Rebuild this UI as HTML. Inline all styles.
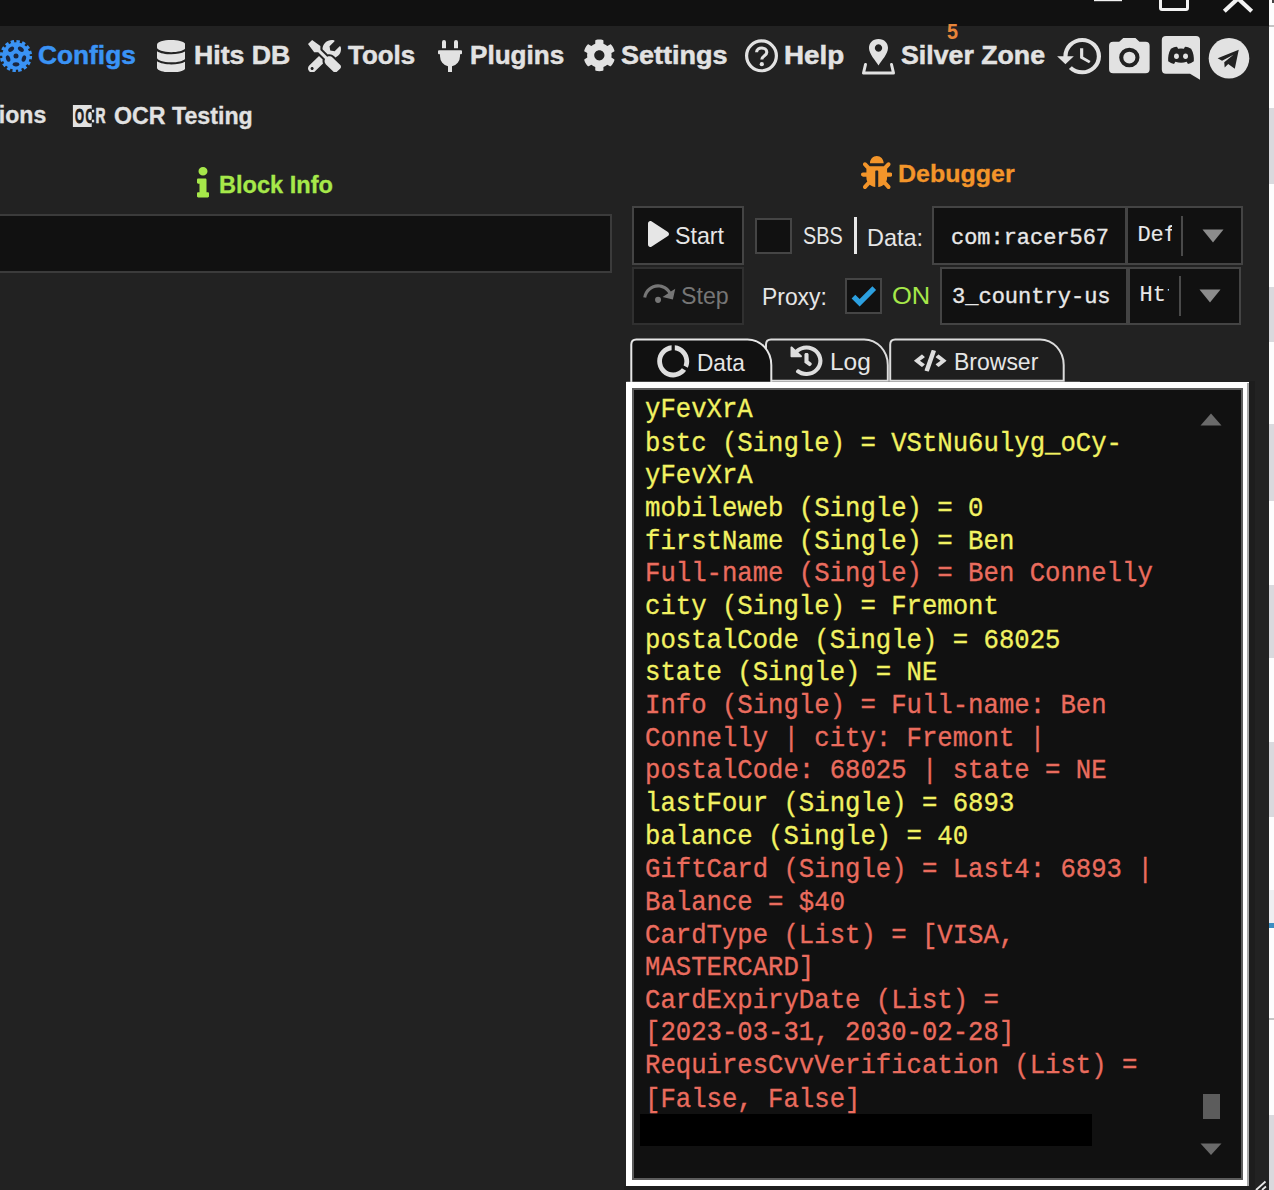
<!DOCTYPE html>
<html>
<head>
<meta charset="utf-8">
<title>SilverBullet</title>
<style>
html,body{margin:0;padding:0;}
body{width:1274px;height:1190px;overflow:hidden;background:#222222;position:relative;font-family:"Liberation Sans",sans-serif;color:#e2e2e2;}
.abs{position:absolute;}
.t{position:absolute;white-space:nowrap;line-height:1;transform-origin:0 0;}
#titlebar{left:0;top:0;width:1269px;height:25.6px;background:#111111;}
#strip{left:1269px;top:0;width:5px;height:1190px;background:#fdfdfd;}
#strip i{position:absolute;left:0;width:5px;background:#d9d9dd;display:block;}
.nav{font-weight:bold;font-size:26.7px;color:#e2e2e2;-webkit-text-stroke:0.5px currentColor;}
.nav2{font-weight:bold;font-size:23.6px;color:#e2e2e2;-webkit-text-stroke:0.3px currentColor;}
.box{position:absolute;background:#111111;border:2px solid #3b3b3b;box-sizing:border-box;}
.btn{font-size:24.2px;color:#e6e6e6;}
.mono{font-family:"Liberation Mono",monospace;color:#e8e8e8;-webkit-text-stroke:0.35px #e8e8e8;}
#ta{left:626.3px;top:382.3px;width:622.4px;height:803.7px;background:#ffffff;}
#ta2{left:632.3px;top:388.3px;width:610.4px;height:791.3px;background:#5c5c5c;}
#ta3{left:633.9px;top:390px;width:607.5px;height:788.2px;background:#111111;}
#log{left:645px;top:394.6px;width:560px;font-family:"Liberation Mono",monospace;font-size:25.65px;line-height:30.654px;color:#f2f262;-webkit-text-stroke:0.3px currentColor;white-space:pre;transform:scaleY(1.07);transform-origin:0 0;}
#log .r{color:#ea6c5e;}
</style>
</head>
<body>
<div id="titlebar" class="abs"></div>
<svg class="abs" style="left:1080px;top:0;" width="189" height="25" viewBox="0 0 189 25">
 <rect x="14" y="-2" width="28" height="3.2" fill="#f2f2f2"/>
 <rect x="80.500" y="-4" width="27" height="13.500" fill="none" stroke="#f2f2f2" stroke-width="3" rx="1.500"/>
 <path d="M144.300,11.200 L158,-1.500 L171.700,11.200" stroke="#f2f2f2" stroke-width="4.200" fill="none" stroke-linejoin="miter"/>
</svg>
<div id="strip" class="abs">
 <i style="top:25px;height:1.500px;background:#c4c4c4"></i>
 <i style="top:0;left:3px;width:2px;height:2.500px;background:#444"></i>
 <i style="top:108px;height:76px"></i>
 <i style="top:287px;height:55px"></i>
 <i style="top:424px;height:76.500px"></i>
 <i style="top:585px;height:73px"></i>
 <i style="top:741.500px;height:75.500px"></i>
 <i style="top:889.500px;height:34px;background:#eeeef1"></i>
 <i style="top:923.300px;height:4.400px;background:#3d8fc2"></i>
 <i style="top:1018px;height:1.500px;background:#c4c4c4"></i>
 <i style="top:1115.400px;height:75px"></i>
</div>

<!-- top nav -->
<svg class="abs" style="left:-0.6px;top:38.6px;" width="34" height="34" viewBox="-17 -17 34 34">
 <g fill="#3a93f5">
  <circle r="13.800"/>
  <circle r="14.300" fill="none" stroke="#3a93f5" stroke-width="3.600" stroke-dasharray="3.300 2.316"/>
 </g>
 <g fill="#1b2740">
  <circle r="2.500"/>
  <ellipse cx="0" cy="-8.300" rx="3.300" ry="2.100" transform="rotate(36)"/>
  <ellipse cx="0" cy="-8.300" rx="3.300" ry="2.100" transform="rotate(108)"/>
  <ellipse cx="0" cy="-8.300" rx="3.300" ry="2.100" transform="rotate(180)"/>
  <ellipse cx="0" cy="-8.300" rx="3.300" ry="2.100" transform="rotate(252)"/>
  <ellipse cx="0" cy="-8.300" rx="3.300" ry="2.100" transform="rotate(324)"/>
 </g>
</svg>
<span id="n1" class="t nav" style="left:38.0px;top:42.0px;color:#3a93f5;transform:scaleX(0.9851);">Configs</span>
<svg class="abs" style="left:156.5px;top:39.5px;" width="28.5" height="32.5" viewBox="0 0 448 512" preserveAspectRatio="none" ><path fill="#e2e2e2" d="M448 73.143v45.714C448 159.143 347.667 192 224 192S0 159.143 0 118.857V73.143C0 32.857 100.333 0 224 0s224 32.857 224 73.143zM448 176v102.857C448 319.143 347.667 352 224 352S0 319.143 0 278.857V176c48.125 33.143 136.208 48.572 224 48.572S399.874 209.143 448 176zm0 160v102.857C448 479.143 347.667 512 224 512S0 479.143 0 438.857V336c48.125 33.143 136.208 48.572 224 48.572S399.874 369.143 448 336z"/></svg>
<span id="n2" class="t nav" style="left:193.9px;top:42.0px;transform:scaleX(0.9986);">Hits DB</span>
<svg class="abs" style="left:308px;top:39.5px;" width="33" height="32.5" viewBox="0 0 512 512" preserveAspectRatio="none" ><path fill="#e2e2e2" d="M501.1 395.7L384 278.6c-23.1-23.1-57.6-27.6-85.4-13.9L192 158.1V96L64 0 0 64l96 128h62.100l106.600 106.600c-13.600 27.800-9.200 62.300 13.900 85.400l117.100 117.100c14.600 14.600 38.200 14.600 52.700 0l52.700-52.700c14.500-14.600 14.500-38.200 0-52.700zM331.700 225c28.300 0 54.900 11 74.900 31l19.400 19.400c15.800-6.900 30.800-16.500 43.800-29.500 37.100-37.100 49.700-89.300 37.900-136.700-2.200-9-13.500-12.100-20.100-5.500l-74.400 74.400-67.900-11.300L334 98.900l74.400-74.400c6.600-6.600 3.400-17.900-5.700-20.200-47.400-11.700-99.600.9-136.600 37.900-28.500 28.500-41.900 66.100-41.200 103.600l82.100 82.100c8.100-1.900 16.500-2.900 24.700-2.900zm-103.900 82l-56.700-56.700L18.700 402.800c-25 25-25 65.500 0 90.500s65.500 25 90.500 0l123.600-123.600c-7.600-19.900-9.900-41.600-5-62.700zM64 472c-13.200 0-24-10.800-24-24 0-13.300 10.700-24 24-24s24 10.700 24 24c0 13.200-10.700 24-24 24z"/></svg>
<span id="n3" class="t nav" style="left:348.3px;top:42.0px;transform:scaleX(0.9696);">Tools</span>
<svg class="abs" style="left:438px;top:39.500px;" width="24" height="32.500" viewBox="0 0 384 512" preserveAspectRatio="none" ><path fill="#e2e2e2" d="M320,32a32,32,0,0,0-64,0v96h64Zm48,128H16A16,16,0,0,0,0,176v32a16,16,0,0,0,16,16H32v32A160.070,160.070,0,0,0,160,412.800V512h64V412.800A160.070,160.070,0,0,0,352,256V224h16a16,16,0,0,0,16-16V176A16,16,0,0,0,368,160ZM128,32a32,32,0,0,0-64,0v96h64Z"/></svg>
<span id="n4" class="t nav" style="left:469.9px;top:42.0px;transform:scaleX(0.9777);">Plugins</span>
<svg class="abs" style="left:582.500px;top:39.300px;" width="32.700" height="32.700" viewBox="0 0 512 512" preserveAspectRatio="none" ><path fill="#e2e2e2" d="M487.4 315.7l-42.600-24.600c4.300-23.200 4.300-47 0-70.200l42.600-24.600c4.900-2.800 7.100-8.600 5.500-14-11.100-35.600-30-67.800-54.700-94.600-3.800-4.100-10-5.100-14.800-2.300L380.800 110c-17.900-15.400-38.500-27.300-60.800-35.100V25.800c0-5.600-3.900-10.500-9.400-11.700-36.700-8.200-74.300-7.800-109.200 0-5.500 1.200-9.400 6.100-9.400 11.700V75c-22.200 7.900-42.800 19.800-60.800 35.100L88.700 85.500c-4.900-2.800-11-1.900-14.800 2.300-24.700 26.700-43.600 58.900-54.700 94.600-1.700 5.400.6 11.200 5.500 14L67.300 221c-4.300 23.200-4.300 47 0 70.200l-42.600 24.600c-4.900 2.800-7.100 8.600-5.500 14 11.100 35.600 30 67.800 54.700 94.600 3.800 4.100 10 5.100 14.800 2.300l42.600-24.600c17.900 15.400 38.500 27.300 60.800 35.100v49.200c0 5.600 3.900 10.500 9.400 11.700 36.700 8.200 74.300 7.800 109.200 0 5.500-1.200 9.400-6.100 9.400-11.700v-49.200c22.200-7.900 42.800-19.800 60.800-35.100l42.600 24.600c4.900 2.800 11 1.900 14.800-2.300 24.700-26.700 43.600-58.900 54.700-94.600 1.500-5.500-.7-11.300-5.600-14.100zM256 336c-44.100 0-80-35.900-80-80s35.900-80 80-80 80 35.900 80 80-35.900 80-80 80z"/></svg>
<span id="n5" class="t nav" style="left:620.9px;top:42.0px;transform:scaleX(1.0117);">Settings</span>
<svg class="abs" style="left:744px;top:38px;" width="36" height="36" viewBox="0 0 36 36">
 <circle cx="17.500" cy="17.850" r="14.900" fill="none" stroke="#e2e2e2" stroke-width="3.200"/>
 <path d="M12.600,14.200 C12.600,8.500 22.800,8.500 22.800,14.200 C22.800,17.800 17.800,17.600 17.800,21.600" fill="none" stroke="#e2e2e2" stroke-width="3.100"/>
 <circle cx="17.800" cy="26.200" r="2.100" fill="#e2e2e2"/>
</svg>
<span id="n6" class="t nav" style="left:783.5px;top:42.0px;transform:scaleX(1.0420);">Help</span>
<svg class="abs" style="left:860px;top:37px;" width="38" height="40" viewBox="0 0 38 40">
 <path fill-rule="evenodd" fill="#e2e2e2" d="M18.500,2 C12.500,2 9,6.300 9,11 C9,17 15.500,23.500 18.500,28.500 C21.500,23.500 28,17 28,11 C28,6.300 24.500,2 18.500,2 Z M18.500,7.300 A3.700,3.700 0 1 1 18.490,7.300 Z"/>
 <path d="M5.500,27.500 L3.500,36 H33.500 L31.500,27.500" fill="none" stroke="#e2e2e2" stroke-width="3" stroke-linejoin="round" stroke-linecap="round"/>
</svg>
<span id="n7" class="t nav" style="left:901.0px;top:42.0px;transform:scaleX(1.0010);">Silver Zone</span>
<span id="n8" class="t" style="left:947.2px;top:21.0px;font-size:22.5px;font-weight:bold;color:#e8853a;transform:scaleX(0.8785);">5</span>
<svg class="abs" style="left:1054.9px;top:31.9px;" width="50.2" height="48.4" viewBox="0 0 24 24" preserveAspectRatio="none" ><path fill="#e2e2e2" d="M13,3A9,9 0 0,0 4,12H1L4.89,15.89L4.96,16.03L9,12H6A7,7 0 0,1 13,5A7,7 0 0,1 20,12A7,7 0 0,1 13,19C11.07,19 9.32,18.21 8.06,16.94L6.64,18.36C8.27,20 10.5,21 13,21A9,9 0 0,0 22,12A9,9 0 0,0 13,3M12,8V13L16.28,15.54L17,14.33L13.5,12.25V8H12Z"/></svg>
<svg class="abs" style="left:1104.7px;top:34.1px;" width="48.7" height="47" viewBox="0 0 24 24" preserveAspectRatio="none" ><path fill="#e2e2e2" d="M4,4H7L9,2H15L17,4H20A2,2 0 0,1 22,6V18A2,2 0 0,1 20,20H4A2,2 0 0,1 2,18V6A2,2 0 0,1 4,4M12,7A5,5 0 0,0 7,12A5,5 0 0,0 12,17A5,5 0 0,0 17,12A5,5 0 0,0 12,7M12,9A3,3 0 0,1 15,12A3,3 0 0,1 12,15A3,3 0 0,1 9,12A3,3 0 0,1 12,9Z"/></svg>
<svg class="abs" style="left:1160px;top:34px;" width="42" height="48" viewBox="0 0 42 48">
 <path fill="#e2e2e2" d="M6,1.900 H36 Q40,1.900 40,6 V45.800 L30,39.700 H6 Q1.800,39.700 1.800,35.500 V6 Q1.800,1.900 6,1.900 Z"/>
 <g transform="translate(21,21.500) scale(0.9) translate(-20.750,-19.500)">
 <path fill="#222" d="M9.500,12 Q14,9.500 16.500,10 L17.500,12 Q20.700,11.500 24,12 L25,10 Q27.500,9.500 32,12 Q35.500,18 35,26 Q32,28.500 28.500,29 L27,26.500 Q21,28.500 14.500,26.500 L13,29 Q9.500,28.500 6.500,26 Q6,18 9.500,12 Z"/>
 <ellipse cx="15.700" cy="20.300" rx="2.700" ry="3" fill="#e2e2e2"/>
 <ellipse cx="25.800" cy="20.300" rx="2.700" ry="3" fill="#e2e2e2"/>
 </g>
</svg>
<svg class="abs" style="left:1208px;top:37px;" width="43" height="43" viewBox="0 0 43 43">
 <circle cx="21" cy="21.300" r="20.300" fill="#e2e2e2"/>
 <g transform="translate(20.200,22.300) scale(0.880) translate(-20.500,-21.750)">
 <path fill="#222" d="M8.500,20.500 L32.500,11 L28,32.500 L20.500,27 L16.500,31 L16,25 L26.500,16.500 L13.500,23.500 Z"/>
 </g>
</svg>

<!-- second row -->
<span id="s1" class="t nav2" style="left:-40.6px;top:104.3px;transform:scaleX(0.979);">Options</span>
<svg class="abs" style="left:72px;top:104px;" width="36" height="24" viewBox="0 0 36 24">
 <rect x="0.900" y="1" width="18.800" height="22" fill="#e2e2e2"/>
 <text x="3" y="19.200" font-family="Liberation Sans, sans-serif" font-weight="bold" font-size="21" fill="#1c1c1c" stroke="#1c1c1c" stroke-width="0.9" textLength="9" lengthAdjust="spacingAndGlyphs">O</text>
 <text x="13.600" y="19.200" font-family="Liberation Sans, sans-serif" font-weight="bold" font-size="21" fill="#1c1c1c" stroke="#1c1c1c" stroke-width="0.9" textLength="8.600" lengthAdjust="spacingAndGlyphs">C</text>
 <rect x="19.900" y="5.800" width="2.300" height="2.600" fill="#e2e2e2"/><rect x="19.900" y="15.700" width="2.300" height="2.600" fill="#e2e2e2"/>
 <text x="23.600" y="19.400" font-family="Liberation Sans, sans-serif" font-weight="bold" font-size="21.500" fill="#e2e2e2" stroke="#e2e2e2" stroke-width="0.7" textLength="10" lengthAdjust="spacingAndGlyphs">R</text>
</svg>
<span id="s2" class="t nav2" style="left:113.7px;top:104.5px;transform:scaleX(0.9835);">OCR Testing</span>

<!-- headers -->
<svg class="abs" style="left:196.500px;top:167px;" width="12" height="30.500" viewBox="0 0 192 512" preserveAspectRatio="none" ><path fill="#a6e84a" d="M20 424.229h20V279.771H20c-11.046 0-20-8.954-20-20V212c0-11.046 8.954-20 20-20h112c11.046 0 20 8.954 20 20v212.229h20c11.046 0 20 8.954 20 20V492c0 11.046-8.954 20-20 20H20c-11.046 0-20-8.954-20-20v-47.771c0-11.046 8.954-20 20-20zM96 0C56.235 0 24 32.235 24 72s32.235 72 72 72 72-32.235 72-72S135.764 0 96 0z"/></svg>
<span id="h1" class="t nav2" style="left:219.1px;top:174.2px;color:#a6e84a;transform:scaleX(0.9994);">Block Info</span>
<svg class="abs" style="left:860.500px;top:156px;" width="31.500" height="33" viewBox="0 0 512 512" preserveAspectRatio="none" ><path fill="#f3952a" d="M511.988 288.900c-.478 17.430-15.217 31.100-32.653 31.100H424v16c0 21.864-4.882 42.584-13.600 61.145l60.228 60.228c12.496 12.497 12.496 32.758 0 45.255-12.498 12.497-32.759 12.496-45.256 0l-54.736-54.736C345.886 467.965 314.351 480 280 480V236c0-6.627-5.373-12-12-12h-24c-6.627 0-12 5.373-12 12v244c-34.351 0-65.886-12.035-90.636-32.108l-54.736 54.736c-12.498 12.497-32.759 12.496-45.256 0-12.496-12.497-12.496-32.758 0-45.255l60.228-60.228C92.882 378.584 88 357.864 88 336v-16H32.666C15.230 320 .491 306.330.013 288.900-.484 270.816 14.028 256 32 256h56v-58.745l-46.628-46.628c-12.496-12.497-12.496-32.758 0-45.255 12.498-12.497 32.758-12.497 45.256 0L141.255 160h229.489l54.627-54.627c12.498-12.497 32.758-12.497 45.256 0 12.496 12.497 12.496 32.758 0 45.255L424 197.255V256h56c17.972 0 32.484 14.816 31.988 32.900zM257 0c-61.856 0-112 50.144-112 112h224C369 50.144 318.856 0 257 0z"/></svg>
<span id="h2" class="t nav2" style="left:897.6px;top:162.5px;color:#f3952a;transform:scaleX(1.0598);">Debugger</span>

<!-- left input -->
<div class="box" style="left:-4px;top:214px;width:616px;height:59px;"></div>

<!-- buttons -->
<div class="box" style="left:632px;top:206px;width:112px;height:59px;border-color:#444;"></div>
<svg class="abs" style="left:648.2px;top:221.4px;" width="21" height="26" viewBox="0 0 448 512" preserveAspectRatio="none" ><path fill="#e6e6e6" d="M424.400 214.700L72.400 6.600C43.800-10.300 0 6.100 0 47.900V464c0 37.500 40.700 60.100 72.400 41.300l352-208c31.400-18.500 31.500-64.100 0-82.600z"/></svg>
<span id="b1" class="t btn" style="left:674.9px;top:224.0px;transform:scaleX(0.9603);">Start</span>
<div class="box" style="left:632px;top:267px;width:112px;height:58px;border-color:#303030;background:#151515;"></div>
<svg class="abs" style="left:639.8px;top:275.4px;" width="36.1" height="37.2" viewBox="0 0 24 24" preserveAspectRatio="none" ><path fill="#767676" d="M12,14A2,2 0 0,1 14,16A2,2 0 0,1 12,18A2,2 0 0,1 10,16A2,2 0 0,1 12,14M23.46,8.86L21.87,15.75L15,14.16L18.8,11.78C17.39,9.5 14.87,8 12,8C8.05,8 4.77,10.86 4.12,14.63L2.15,14.28C2.96,9.58 7.06,6 12,6C15.58,6 18.73,7.89 20.5,10.72L23.46,8.86Z"/></svg>
<span id="b2" class="t btn" style="left:680.9px;top:284.0px;color:#767676;transform:scaleX(0.9583);">Step</span>

<!-- SBS / Data row -->
<div class="box" style="left:755px;top:218px;width:37px;height:36px;border-color:#454545;"></div>
<span id="c1" class="t btn" style="left:803.0px;top:223.6px;transform:scaleX(0.8214);">SBS</span>
<div class="abs" style="left:854px;top:217px;width:2.500px;height:37px;background:#e8e8e8;"></div>
<span id="c2" class="t btn" style="left:866.8px;top:226.2px;transform:scaleX(0.9705);">Data<b style="font-weight:normal">:</b></span>
<div class="box" style="left:932px;top:206px;width:195px;height:59px;border-color:#444;"></div>
<span id="m1" class="t mono" style="left:950.6px;top:227.6px;font-size:22px;transform:scaleX(0.9970);">com:racer567</span>
<div class="box" style="left:1126px;top:206px;width:117px;height:59px;border-color:#444;"></div>
<div class="abs" style="left:1136px;top:215px;width:35.6px;height:40px;overflow:hidden;"><span id="m2" class="t mono" style="-webkit-text-stroke:0.1px #e8e8e8;left:1.4px;top:10.4px;font-size:22px;transform:scaleX(1.0000);">Default</span></div>
<div class="abs" style="left:1181px;top:216px;width:2px;height:40px;background:#4a4a4a;"></div>
<svg class="abs" style="left:1202px;top:229px;" width="22" height="14" viewBox="0 0 22 14"><path d="M0.500,0.500 H21.500 L11,13.500 Z" fill="#8c8c8c"/></svg>

<!-- Proxy row -->
<span id="c3" class="t btn" style="left:762.0px;top:284.6px;transform:scaleX(0.9461);">Proxy:</span>
<div class="box" style="left:845px;top:278px;width:37px;height:36px;border-color:#454545;"></div>
<svg class="abs" style="left:847.9px;top:279.7px;" width="31.06" height="31.06" viewBox="0 0 24 24" preserveAspectRatio="none" ><path fill="#2ca0e0" d="M9,20.42L2.79,14.21L5.62,11.38L9,14.77L18.88,4.88L21.71,7.71L9,20.42Z"/></svg>
<span id="c4" class="t btn" style="left:892.1px;top:284.0px;color:#a6e84a;transform:scaleX(1.0532);">ON</span>
<div class="box" style="left:940px;top:267px;width:188px;height:58px;border-color:#444;"></div>
<span id="m3" class="t mono" style="left:952.0px;top:287.4px;font-size:22px;transform:scaleX(1.0009);">3_country-us</span>
<div class="box" style="left:1128px;top:267px;width:113px;height:58px;border-color:#444;"></div>
<div class="abs" style="left:1138px;top:276px;width:30.8px;height:40px;overflow:hidden;"><span id="m4" class="t mono" style="-webkit-text-stroke:0.1px #e8e8e8;left:1.6px;top:9.0px;font-size:22px;transform:scaleX(1.0000);">Http</span></div>
<div class="abs" style="left:1179px;top:276px;width:2px;height:40px;background:#4a4a4a;"></div>
<svg class="abs" style="left:1199px;top:289px;" width="22" height="14" viewBox="0 0 22 14"><path d="M0.500,0.500 H21.500 L11,13.500 Z" fill="#8c8c8c"/></svg>

<!-- tabs -->
<svg class="abs" style="left:620px;top:330px;" width="460" height="56" viewBox="0 0 460 56">
 <path d="M270.200,50.850 V14.400 Q270.200,9.400 275.200,9.400 H420 A23.700,25.600 0 0 1 443.700,35 V50.850 Z" fill="#1e1e1e" stroke="#dcdcdc" stroke-width="2"/>
 <path d="M146,50.850 V14.400 Q146,9.400 151,9.400 H244.100 A23.700,25.600 0 0 1 267.800,35 V50.850 Z" fill="#1e1e1e" stroke="#dcdcdc" stroke-width="2"/>
 <path d="M11.300,54 V14.400 Q11.300,9.400 16.300,9.400 H127.600 A23.700,25.600 0 0 1 151.300,35 V54 Z" fill="#111111" stroke="#e6e6e6" stroke-width="2"/>
 <rect x="6.300" y="51.700" width="622.400" height="1.200" fill="#b8b8b8"/>
</svg>
<svg class="abs" style="left:653.8px;top:341.6px;" width="38.4" height="38.6" viewBox="0 0 24 24" preserveAspectRatio="none" ><path fill="#dedede" d="M13,2.05V5.08C16.39,5.57 19,8.47 19,12C19,12.9 18.82,13.75 18.52,14.54L21.12,16.07C21.68,14.83 22,13.45 22,12C22,6.82 18.05,2.55 13,2.05M12,19A7,7 0 0,1 5,12C5,8.47 7.61,5.57 11,5.08V2.05C5.94,2.55 2,6.81 2,12A10,10 0 0,0 12,22C15.3,22 18.23,20.39 20.05,17.91L17.45,16.38C16.17,18 14.21,19 12,19Z"/></svg>
<span id="t1" class="t btn" style="left:696.5px;top:351.2px;transform:scaleX(0.9365);">Data</span>
<svg class="abs" style="left:789.500px;top:344.500px;" width="33" height="31.500" viewBox="0 0 512 512" preserveAspectRatio="none" ><path fill="#dedede" d="M504 255.531c.253 136.640-111.180 248.372-247.820 248.468-59.015.042-113.223-20.530-155.822-54.911-11.077-8.940-11.905-25.541-1.839-35.607l11.267-11.267c8.609-8.609 22.353-9.551 31.891-1.984C173.062 425.135 212.781 440 256 440c101.705 0 184-82.311 184-184 0-101.705-82.311-184-184-184-48.814 0-93.149 18.969-126.068 49.932l50.754 50.754c10.080 10.080 2.941 27.314-11.313 27.314H24c-8.837 0-16-7.163-16-16V38.627c0-14.254 17.234-21.393 27.314-11.314l49.372 49.372C129.209 34.136 189.552 8 256 8c136.810 0 247.747 110.780 248 247.531zm-180.912 78.784l9.823-12.630c8.138-10.463 6.253-25.542-4.210-33.679L288 256.349V152c0-13.255-10.745-24-24-24h-16c-13.255 0-24 10.745-24 24v135.651l65.409 50.874c10.463 8.137 25.541 6.253 33.679-4.210z"/></svg>
<span id="t2" class="t btn" style="left:829.8px;top:349.8px;transform:scaleX(1.0119);">Log</span>
<svg class="abs" style="left:914px;top:350px;" width="32.500" height="21.500" viewBox="0 0 640 512" preserveAspectRatio="none" ><path fill="#dedede" d="M278.900 511.500l-61-17.700c-6.400-1.800-10-8.500-8.200-14.900L346.200 8.700c1.800-6.400 8.500-10 14.900-8.200l61 17.700c6.400 1.800 10 8.500 8.200 14.900L293.800 503.300c-1.900 6.400-8.500 10.100-14.900 8.200zm-114-112.200l43.500-46.400c4.600-4.900 4.300-12.700-.8-17.200L117 256l90.600-79.700c5.100-4.500 5.500-12.300.8-17.200l-43.500-46.400c-4.500-4.800-12.100-5.100-17-.5L3.800 247.200c-5.100 4.700-5.100 12.800 0 17.500l144.100 135.100c4.900 4.600 12.500 4.400 17-.5zm327.200.6l144.100-135.100c5.100-4.700 5.100-12.800 0-17.500L492.100 112.100c-4.800-4.500-12.400-4.300-17 .5L431.600 159c-4.600 4.900-4.300 12.700.8 17.200L523 256l-90.600 79.700c-5.100 4.500-5.500 12.300-.8 17.200l43.500 46.400c4.500 4.900 12.100 5.100 17 .6z"/></svg>
<span id="t3" class="t btn" style="left:954.0px;top:349.8px;transform:scaleX(0.9505);">Browser</span>

<!-- text area -->
<div class="abs" style="left:1249px;top:381px;width:6px;height:809px;background:#1d1d1d;"></div>
<div class="abs" style="left:624px;top:1186px;width:631px;height:4px;background:#1d1d1d;"></div>
<div id="ta" class="abs"></div>
<div class="abs" style="left:1247.300px;top:383px;width:1.700px;height:803px;background:#a8a8a8;"></div>
<div id="ta2" class="abs"></div>
<div id="ta3" class="abs"></div>
<div id="log" class="abs">yFevXrA
bstc (Single) = VStNu6ulyg_oCy-
yFevXrA
mobileweb (Single) = 0
firstName (Single) = Ben
<span class="r">Full-name (Single) = Ben Connelly</span>
city (Single) = Fremont
postalCode (Single) = 68025
state (Single) = NE
<span class="r">Info (Single) = Full-name: Ben
Connelly | city: Fremont |
postalCode: 68025 | state = NE</span>
lastFour (Single) = 6893
balance (Single) = 40
<span class="r">GiftCard (Single) = Last4: 6893 |
Balance = $40
CardType (List) = [VISA,
MASTERCARD]
CardExpiryDate (List) =
[2023-03-31, 2030-02-28]
RequiresCvvVerification (List) =
[False, False]</span></div>
<div class="abs" style="left:640px;top:1114px;width:452px;height:32px;background:#000000;"></div>
<!-- scrollbar -->
<svg class="abs" style="left:1200px;top:413px;" width="22" height="13" viewBox="0 0 22 13"><path d="M0.500,12.500 H21.500 L11,0.500 Z" fill="#6a6a6a"/></svg>
<div class="abs" style="left:1203px;top:1094px;width:16.500px;height:25px;background:#5c5c5c;"></div>
<svg class="abs" style="left:1200px;top:1143px;" width="22" height="13" viewBox="0 0 22 13"><path d="M0.500,0.500 H21.500 L11,12 Z" fill="#6a6a6a"/></svg>
<!-- resize grip -->
<svg class="abs" style="left:1254px;top:1176px;" width="15" height="14" viewBox="0 0 15 14"><path d="M2,14 L11.500,5.500 M8,14 L12,10.500" stroke="#e8e8e8" stroke-width="1.800" fill="none"/></svg>
</body>
</html>
